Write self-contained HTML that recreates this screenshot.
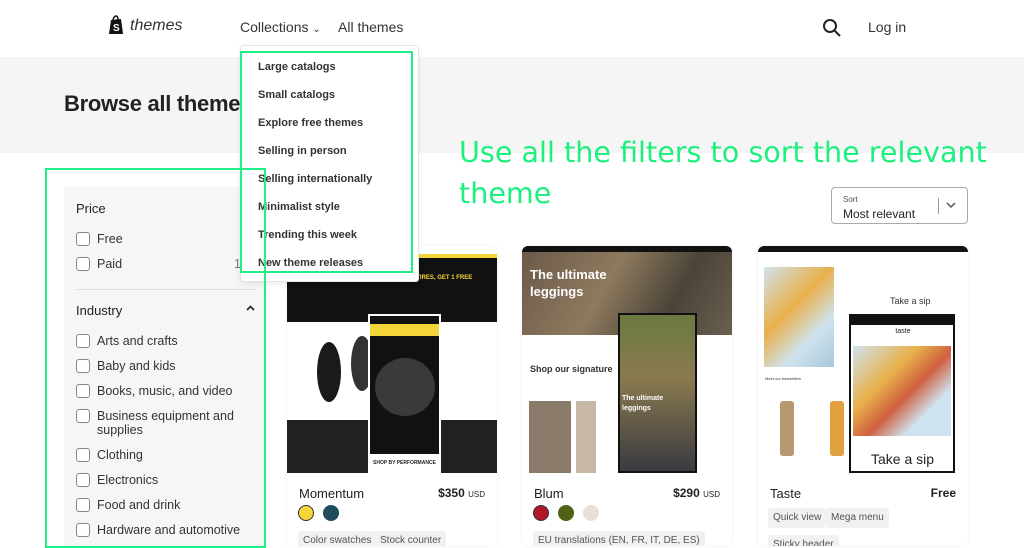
<!DOCTYPE html>
<html><head><meta charset="utf-8"><style>
*{margin:0;padding:0;box-sizing:border-box}
body{width:1024px;height:542px;overflow:hidden;background:#fff;font-family:"Liberation Sans",sans-serif;color:#222;position:relative}
.abs{position:absolute}
.band{left:0;top:57px;width:1024px;height:96px;background:#f5f5f5}
.nav{font-size:14px;color:#333}
.panel{left:64px;top:187px;width:202px;height:360px;background:#f6f6f6}
.cb{position:absolute;width:14px;height:14px;border:1.3px solid #888;border-radius:3px;background:#fff}
.lbl{position:absolute;font-size:12.5px;color:#333}
.dd{left:240px;top:45px;width:179px;height:237px;background:#fff;border:1px solid #e3e3e3;border-radius:3px;box-shadow:0 2px 6px rgba(0,0,0,.08)}
.dd div{position:absolute;left:17px;font-size:11px;font-weight:bold;color:#333}
.green{border:2px solid #22ee88;position:absolute}
.card{position:absolute;top:246px;width:210px;height:300px;background:#fff;border-radius:6px;box-shadow:0 0 3px rgba(0,0,0,.08);overflow:hidden}
.img{position:absolute;left:0;top:0;width:210px;height:227px}
.name{position:absolute;left:12px;top:240px;font-size:13px;color:#222}
.price{position:absolute;right:12px;top:240px;font-size:12px;font-weight:bold;color:#222}
.sw{position:absolute;top:259px;width:16px;height:16px;border-radius:50%}
.tag{position:absolute;top:285px;height:20px;background:#f1f1f1;border-radius:3px;font-size:10px;color:#555;padding:4px 5px}
</style></head><body>
<div class="abs band"></div>
<svg class="abs" style="left:108px;top:15px" width="17" height="20" viewBox="0 0 17 20"><path d="M3 5 L13 4 L15 19 L1 19 Z" fill="#111"/><path d="M5 5 Q6 1 8 1 Q10 1 10 5" stroke="#111" fill="none" stroke-width="1.5"/><text x="5" y="16" font-size="10" font-weight="bold" fill="#fff" font-family="Liberation Sans">S</text></svg>
<div class="abs" style="left:130px;top:17px;font-size:16px;font-style:italic;color:#333;font-family:'Liberation Sans'">themes</div>
<div class="abs nav" style="left:240px;top:19px">Collections <span style="font-size:10px">⌄</span></div>
<div class="abs nav" style="left:338px;top:19px">All themes</div>
<svg class="abs" style="left:822px;top:18px" width="20" height="20" viewBox="0 0 20 20"><circle cx="8" cy="8" r="6" stroke="#222" stroke-width="2" fill="none"/><path d="M12.5 12.5 L18 18" stroke="#222" stroke-width="2"/></svg>
<div class="abs nav" style="left:868px;top:19px">Log in</div>
<div class="abs" style="left:64px;top:91px;font-size:22px;font-weight:bold;color:#222;letter-spacing:-.3px">Browse all themes</div>
<div class="abs" style="left:459px;top:132px;font-family:'DejaVu Sans',sans-serif;font-size:28.6px;color:#1ef07f;line-height:41px;width:565px">Use all the filters to sort the relevant theme</div>
<div class="abs" style="left:831px;top:187px;width:137px;height:37px;border:1px solid #aaa;border-radius:4px;background:#fff">
<div class="abs" style="left:11px;top:7px;font-size:8px;color:#555">Sort</div>
<div class="abs" style="left:11px;top:19px;font-size:12px;color:#222">Most relevant</div>
<div class="abs" style="left:106px;top:10px;width:1px;height:16px;background:#999"></div>
<svg class="abs" style="left:114px;top:14px" width="10" height="7"><path d="M1 1 L5 5 L9 1" stroke="#666" stroke-width="1.6" fill="none"/></svg>
</div>
<div class="abs panel"></div>
<div class="abs" style="left:76px;top:201px;font-size:13px;color:#222">Price</div>
<div class="cb" style="left:76px;top:232px"></div><div class="lbl" style="left:97px;top:232px">Free</div>
<div class="cb" style="left:76px;top:257px"></div><div class="lbl" style="left:97px;top:257px">Paid</div>
<div class="lbl" style="left:234px;top:257px;color:#777">1</div>
<div class="abs" style="left:76px;top:289px;width:180px;height:1px;background:#ddd"></div>
<div class="abs" style="left:76px;top:303px;font-size:13px;color:#222">Industry</div>
<svg class="abs" style="left:246px;top:305px" width="9" height="6"><path d="M1 5 L4.5 1.5 L8 5" stroke="#222" stroke-width="1.6" fill="none"/></svg>
<div class="cb" style="left:76px;top:334px"></div><div class="lbl" style="left:97px;top:334px">Arts and crafts</div>
<div class="cb" style="left:76px;top:359px"></div><div class="lbl" style="left:97px;top:359px">Baby and kids</div>
<div class="cb" style="left:76px;top:384px"></div><div class="lbl" style="left:97px;top:384px">Books, music, and video</div>
<div class="cb" style="left:76px;top:409px"></div><div class="lbl" style="left:97px;top:409px;line-height:14px">Business equipment and<br>supplies</div>
<div class="cb" style="left:76px;top:448px"></div><div class="lbl" style="left:97px;top:448px">Clothing</div>
<div class="cb" style="left:76px;top:473px"></div><div class="lbl" style="left:97px;top:473px">Electronics</div>
<div class="cb" style="left:76px;top:498px"></div><div class="lbl" style="left:97px;top:498px">Food and drink</div>
<div class="cb" style="left:76px;top:523px"></div><div class="lbl" style="left:97px;top:523px">Hardware and automotive</div>
<div class="card" style="left:287px">
 <div class="img" style="background:#fff">
  <div class="abs" style="left:0;top:8px;width:210px;height:68px;background:#111"></div>
  <div class="abs" style="left:0;top:8px;width:210px;height:4px;background:#f5d63a"></div>
  <div class="abs" style="left:110px;top:29px;font-size:6px;color:#f5d63a;font-weight:bold">BUY 3 TIRES, GET 1 FREE</div>
  <div class="abs" style="left:30px;top:96px;width:24px;height:60px;border-radius:50%;background:#1a1a1a"></div>
  <div class="abs" style="left:64px;top:90px;width:22px;height:55px;border-radius:50%;background:#333"></div>
  <div class="abs" style="left:0;top:174px;width:210px;height:53px;background:#222"></div>
  <div class="abs" style="left:81px;top:68px;width:73px;height:159px;background:#111;border:2px solid #fff"></div>
  <div class="abs" style="left:83px;top:78px;width:69px;height:12px;background:#f5d63a"></div>
  <div class="abs" style="left:88px;top:112px;width:60px;height:58px;border-radius:50%;background:#3a3a3a"></div>
  <div class="abs" style="left:83px;top:208px;width:69px;height:19px;background:#fff;font-size:5px;font-weight:bold;padding:6px 3px">SHOP BY PERFORMANCE</div>
 </div>
 <div class="name">Momentum</div><div class="price">$350 <span style="font-size:8px;font-weight:normal">USD</span></div>
 <div class="sw" style="left:11px;background:#f5d63a;border:1.5px solid #333"></div>
 <div class="sw" style="left:36px;background:#1f4b5a"></div>
 <div class="tag" style="left:11px">Color swatches</div><div class="tag" style="left:88px">Stock counter</div>
</div>
<div class="card" style="left:522px">
 <div class="img" style="background:#fff">
  <div class="abs" style="left:0;top:0;width:210px;height:6px;background:#111"></div>
  <div class="abs" style="left:0;top:6px;width:210px;height:83px;background:linear-gradient(120deg,#6b5a4a,#8e7a5e 40%,#4a4438 70%,#6a6050)"></div>
  <div class="abs" style="left:8px;top:20px;font-size:13px;font-weight:bold;color:#fff;line-height:17px">The ultimate<br>leggings</div>
  <div class="abs" style="left:8px;font-size:9px;color:#333;font-weight:bold;top:118px">Shop our signature</div>
  <div class="abs" style="left:7px;top:155px;width:42px;height:72px;background:#8a7a6a"></div>
  <div class="abs" style="left:54px;top:155px;width:20px;height:72px;background:#c8b8a8"></div>
  <div class="abs" style="left:96px;top:67px;width:79px;height:160px;background:linear-gradient(180deg,#6a7a40,#8a7a50 40%,#3a3a40);border:2px solid #111"></div>
  <div class="abs" style="left:100px;top:148px;font-size:7px;font-weight:bold;color:#fff;line-height:10px">The ultimate<br>leggings</div>
 </div>
 <div class="name">Blum</div><div class="price">$290 <span style="font-size:8px;font-weight:normal">USD</span></div>
 <div class="sw" style="left:11px;background:#b0182a;border:1.5px solid #333"></div>
 <div class="sw" style="left:36px;background:#4e6414"></div>
 <div class="sw" style="left:61px;background:#e8e0d8"></div>
 <div class="tag" style="left:11px">EU translations (EN, FR, IT, DE, ES)</div>
</div>
<div class="card" style="left:758px">
 <div class="img" style="background:#fff">
  <div class="abs" style="left:0;top:0;width:210px;height:6px;background:#111"></div>
  <div class="abs" style="left:6px;top:21px;width:70px;height:100px;background:linear-gradient(135deg,#cfe3ee,#e8b04a 40%,#cfe3ee 70%,#a8c8d8)"></div>
  <div class="abs" style="left:132px;top:50px;font-size:9px;color:#333">Take a sip</div>
  <div class="abs" style="left:7px;top:130px;font-size:4px;color:#333">Meet our bestsellers</div>
  <div class="abs" style="left:22px;top:155px;width:14px;height:55px;background:#b89870;border-radius:3px"></div>
  <div class="abs" style="left:72px;top:155px;width:14px;height:55px;background:#e0a040;border-radius:3px"></div>
  <div class="abs" style="left:91px;top:68px;width:106px;height:159px;background:#fff;border:2px solid #111"></div>
  <div class="abs" style="left:91px;top:68px;width:106px;height:11px;background:#111"></div>
  <div class="abs" style="left:99px;top:82px;width:92px;height:14px;font-size:7px;text-align:center">taste</div>
  <div class="abs" style="left:95px;top:100px;width:98px;height:90px;background:linear-gradient(135deg,#cfe3ee,#e8b04a 35%,#d06040 55%,#cfe3ee 75%)"></div>
  <div class="abs" style="left:113px;top:205px;font-size:14px;color:#222">Take a sip</div>
 </div>
 <div class="name">Taste</div><div class="price">Free</div>
 <div class="tag" style="left:10px;top:262px;font-size:10px">Quick view</div><div class="tag" style="left:68px;top:262px">Mega menu</div>
 <div class="tag" style="left:10px;top:289px">Sticky header</div>
</div>
<div class="abs dd">
 <div style="top:15px">Large catalogs</div>
 <div style="top:43px">Small catalogs</div>
 <div style="top:71px">Explore free themes</div>
 <div style="top:99px">Selling in person</div>
 <div style="top:127px">Selling internationally</div>
 <div style="top:155px">Minimalist style</div>
 <div style="top:183px">Trending this week</div>
 <div style="top:211px">New theme releases</div>
</div>
<div class="green" style="left:240px;top:51px;width:173px;height:222px"></div>
<div class="green" style="left:45px;top:168px;width:221px;height:380px"></div>
</body></html>
